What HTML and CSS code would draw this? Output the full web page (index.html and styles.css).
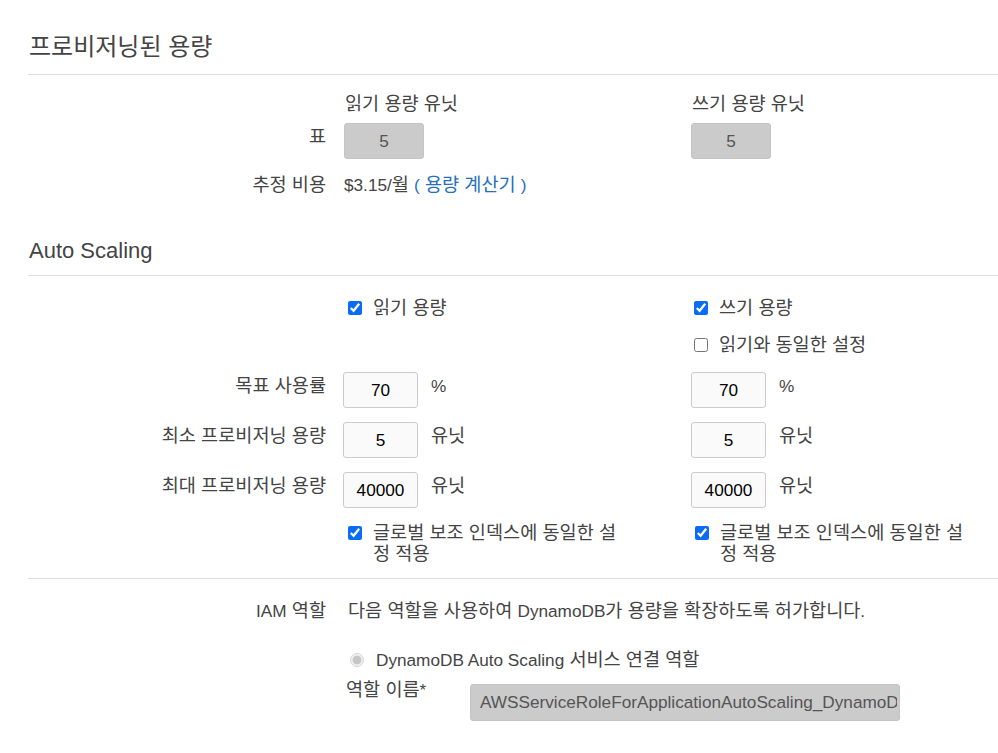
FILE: index.html
```html
<!DOCTYPE html>
<html lang="ko">
<head>
<meta charset="utf-8">
<title>프로비저닝된 용량</title>
<link rel="stylesheet" href="styles.css">
</head>
<body>
<div class="page">
  <section class="sec sec-prov">
    <h2 class="sec-title">프로비저닝된 용량</h2>
    <div class="row row-head">
      <div class="lbl"></div>
      <div class="colhead">읽기 용량 유닛</div>
      <div class="colhead">쓰기 용량 유닛</div>
    </div>
    <div class="row row-units">
      <div class="lbl lbl-inp">표</div>
      <div><input class="inp inp-dis" type="text" value="5" disabled></div>
      <div><input class="inp inp-dis" type="text" value="5" disabled></div>
    </div>
    <div class="row row-cost">
      <div class="lbl">추정 비용</div>
      <div class="span2"><span class="en">$3.15/</span>월 <a class="link" href="#"><span class="en">(</span> 용량 계산기 <span class="en">)</span></a></div>
    </div>
  </section>

  <section class="sec sec-auto">
    <h2 class="sec-title title-auto"><span class="en">Auto Scaling</span></h2>
    <div class="row row-check1">
      <div class="lbl"></div>
      <label class="chk"><input type="checkbox" checked><span>읽기 용량</span></label>
      <label class="chk"><input type="checkbox" checked><span>쓰기 용량</span></label>
    </div>
    <div class="row row-check2">
      <div class="lbl"></div>
      <div></div>
      <label class="chk"><input type="checkbox"><span>읽기와 동일한 설정</span></label>
    </div>
    <div class="row row-field row-first">
      <div class="lbl lbl-inp">목표 사용률</div>
      <div class="field"><input class="inp inp-num" type="text" value="70"><span class="unit en">%</span></div>
      <div class="field field-r"><input class="inp inp-num" type="text" value="70"><span class="unit en">%</span></div>
    </div>
    <div class="row row-field">
      <div class="lbl lbl-inp">최소 프로비저닝 용량</div>
      <div class="field"><input class="inp inp-num" type="text" value="5"><span class="unit">유닛</span></div>
      <div class="field field-r"><input class="inp inp-num" type="text" value="5"><span class="unit">유닛</span></div>
    </div>
    <div class="row row-field">
      <div class="lbl lbl-inp">최대 프로비저닝 용량</div>
      <div class="field"><input class="inp inp-num" type="text" value="40000"><span class="unit">유닛</span></div>
      <div class="field field-r"><input class="inp inp-num" type="text" value="40000"><span class="unit">유닛</span></div>
    </div>
    <div class="row row-gsi">
      <div class="lbl"></div>
      <label class="chk chk-wrap"><input type="checkbox" checked><span class="wraptext">글로벌 보조 인덱스에 동일한 설정 적용</span></label>
      <label class="chk chk-wrap"><input type="checkbox" checked><span class="wraptext">글로벌 보조 인덱스에 동일한 설정 적용</span></label>
    </div>
  </section>

  <section class="sec sec-iam">
    <div class="row row-iam">
      <div class="lbl"><span class="en">IAM</span> 역할</div>
      <div class="span2">다음 역할을 사용하여 <span class="en">DynamoDB</span>가 용량을 확장하도록 허가합니다<span class="en">.</span></div>
    </div>
    <div class="row row-radio">
      <div class="lbl"></div>
      <label class="radio span2"><input type="radio" name="role" checked disabled><span><span class="en">DynamoDB Auto Scaling</span> 서비스 연결 역할</span></label>
    </div>
    <div class="row row-name">
      <div class="lbl"></div>
      <div class="span2 name-field">
        <span class="name-lbl">역할 이름<span class="en">*</span></span>
        <input class="inp inp-role" type="text" value="AWSServiceRoleForApplicationAutoScaling_DynamoDB" disabled>
      </div>
    </div>
  </section>
</div>
</body>
</html>
```

FILE: styles.css
```css
html, body {
  margin: 0;
  padding: 0;
  background: #fff;
}

body {
  font-family: "Liberation Sans", Arial, "Noto Sans CJK KR", sans-serif;
  font-size: 18.6px;
  line-height: 22px;
  color: #444;
}

.en {
  font-size: 17.2px;
  line-height: 1;
}

.page {
  padding-left: 28px;
}

.sec {
  border-bottom: 1px solid #ddd;
}

.sec-iam {
  border-bottom: none;
}

.sec-title {
  margin: 0;
  padding: 32px 0 12px 1px;
  font-size: 24px;
  line-height: 30px;
  font-weight: normal;
  color: #444;
  border-bottom: 1px solid #ddd;
}

.sec-title .en {
  font-size: 22px;
}

.sec-prov {
  border-bottom: none;
  padding-bottom: 39px;
}

.title-auto {
  padding-top: 0;
  padding-bottom: 10px;
}

.sec-auto {
  padding-bottom: 14px;
}

.row {
  display: grid;
  grid-template-columns: 298px 330px 1fr;
  column-gap: 17px;
  align-items: start;
}

.lbl {
  text-align: right;
}

.lbl-inp {
  padding-top: 3px;
}

.span2 {
  grid-column: 2 / 4;
}

.row-head { margin-top: 18px; }
.colhead { padding-left: 2px; }

.row-units { margin-top: 8px; }

.row-cost { margin-top: 15px; }
.row-cost .span2 { padding-left: 1px; }

.link {
  color: #2470bd;
  text-decoration: none;
}

.inp {
  box-sizing: border-box;
  font-family: "Liberation Sans", Arial, "Noto Sans CJK KR", sans-serif;
  font-size: 17.2px;
  border-radius: 3px;
  outline: none;
  margin: 0;
}

.inp-dis {
  width: 80px;
  height: 36px;
  margin-left: 1px;
  background: #cbcbcb;
  border: 1px solid #c4c4c4;
  color: #555;
  text-align: center;
  padding: 0;
}

.row-check1 { margin-top: 21px; }
.row-check2 { margin-top: 15px; }

.chk {
  display: flex;
  align-items: center;
  gap: 11px;
  padding-left: 5px;
  color: #444;
}

.chk input {
  width: 14px;
  height: 14px;
  margin: 0;
  accent-color: #0a6cf5;
  flex: none;
}

.row-check1 .chk:last-child,
.row-check2 .chk { padding-left: 4px; }

.row-field { margin-top: 14px; }
.row-first { margin-top: 16px; }

.field {
  display: flex;
  align-items: flex-start;
}

.field-r {
  padding-left: 1px;
}

.inp-num {
  width: 75px;
  height: 36px;
  background: #fafafa;
  border: 1px solid #ccc;
  color: #000;
  text-align: center;
  padding: 0;
}

.unit {
  margin-left: 13px;
  padding-top: 3px;
  line-height: 22px;
}

.row-gsi { margin-top: 14px; }

.chk-wrap {
  align-items: flex-start;
  line-height: 21px;
}

.chk-wrap input {
  margin-top: 4px;
}

.wraptext {
  width: 252px;
}

.row-iam { margin-top: 21px; }
.row-iam .span2 { padding-left: 5px; }

.row-radio { margin-top: 27px; }

.radio {
  display: flex;
  align-items: center;
  gap: 12px;
  padding-left: 7px;
}

.radio input {
  appearance: none;
  -webkit-appearance: none;
  box-sizing: border-box;
  width: 14px;
  height: 14px;
  margin: 0;
  border-radius: 50%;
  border: 1px solid #d6d6d6;
  background: radial-gradient(circle, #c6c6c6 0, #c6c6c6 4px, #f1f1f1 4.8px);
  flex: none;
}

.row-name { margin-top: 8px; }

.name-field {
  display: flex;
  align-items: flex-start;
  padding-left: 3px;
}

.name-lbl {
  width: 124px;
  flex: none;
}

.inp-role {
  margin-top: 5px;
  width: 430px;
  height: 37px;
  background: #cbcbcb;
  border: 1px solid #c4c4c4;
  color: #555;
  padding: 0 2px 0 9px;
  text-align: left;
}
```
